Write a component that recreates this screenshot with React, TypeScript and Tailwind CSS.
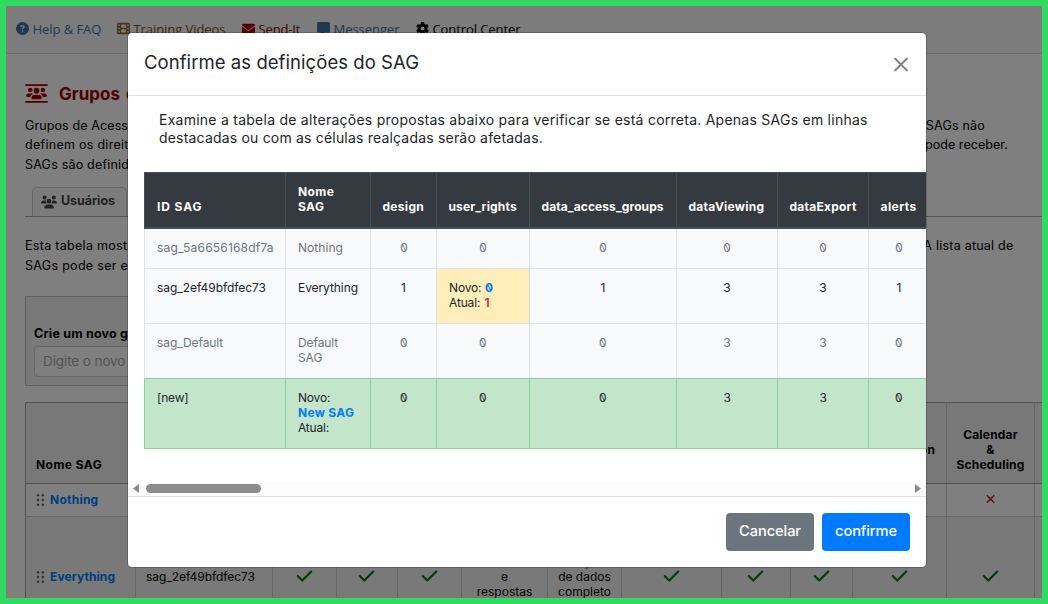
import type { ReactNode } from "react";
import {
  FaCheck,
  FaCircleQuestion,
  FaEnvelope,
  FaFilm,
  FaGear,
  FaMessage,
  FaUsers,
  FaUsersBetweenLines,
  FaXmark,
} from "react-icons/fa6";

function Zero() {
  return <span className="inline-block -scale-x-100 slashed-zero">0</span>;
}

function Digit({ v }: { v: string }) {
  return v === "0" ? <Zero /> : <span>{v}</span>;
}

const navItems: { icon: ReactNode; label: string; style: string; iconStyle: string }[] = [
  { icon: <FaCircleQuestion />, label: "Help & FAQ", style: "text-[#3e72a8] w-[101px] tracking-[-0.06px]", iconStyle: "text-[#3e72a8]" },
  { icon: <FaFilm />, label: "Training Videos", style: "text-[#725627] w-[125px] tracking-[-0.07px]", iconStyle: "text-[#8a6a30]" },
  { icon: <FaEnvelope />, label: "Send-It", style: "text-[#800000] w-[75px] tracking-[-0.14px]", iconStyle: "text-[#a00000]" },
  { icon: <FaMessage />, label: "Messenger", style: "text-[#3e72a8] w-[99px] tracking-[-0.04px]", iconStyle: "text-[#3e72a8]" },
  { icon: <FaGear />, label: "Control Center", style: "text-black tracking-[-0.09px]", iconStyle: "text-black" },
];

function NavBar() {
  return (
    <nav className="flex h-[48px] items-center border-b border-[#dddddd] bg-[#f8f8f8] pl-[10px] font-['Open_Sans',sans-serif] text-[13px]">
      {navItems.map((item) => (
        <div key={item.label} className={`flex shrink-0 items-center gap-[3.5px] whitespace-nowrap ${item.style}`}>
          <span className={`-translate-y-px ${item.iconStyle}`}>{item.icon}</span>
          {item.label}
        </div>
      ))}
    </nav>
  );
}

const columns = ["w-[64px]", "w-[61px]", "w-[64px]", "w-[86px]", "w-[74px]", "w-[100px]", "w-[69px]", "w-[62px]", "w-[94px]", "w-[88px]", "w-[40px]"];

function Check() {
  return <FaCheck className="size-[18px] -translate-x-[0.5px] text-[#008000]" />;
}

function Grip() {
  return (
    <svg className="size-[12px] translate-x-px text-[#606468]" viewBox="0 0 12 12" fill="currentColor">
      {[1.3, 6, 10.7].map((y) => (
        <g key={y}>
          <circle cx="3" cy={y} r="1.25" />
          <circle cx="7.8" cy={y} r="1.25" />
        </g>
      ))}
    </svg>
  );
}

function RolesTable() {
  const cell = "shrink-0 border-l border-[#cccccc]";
  return (
    <div className="mt-[16px] w-[1030px] border-t border-[#a8a8a8] text-[12px] leading-[15px] text-black">
      <div className="flex h-[81px] items-end border-b border-[#a0a0a0] bg-[#f0f0f0] text-center font-bold">
        <div className="flex h-full w-[110px] shrink-0 items-end border-l border-[#a0a0a0] pb-[11px] pl-[10px] tracking-[0.45px]">Nome SAG</div>
        <div className={`${cell} h-full w-[137px]`} />
        {columns.map((w, i) => (
          <div key={i} className={`${cell} ${w} flex h-full items-end justify-center pb-[11px] tracking-[0.2px]`}>
            {i === 8 && <div>Survey<br />Distribution<br />Tools</div>}
            {i === 9 && <div>Calendar<br />&amp;<br />Scheduling</div>}
          </div>
        ))}
      </div>
      <div className="flex h-[33px] border-b border-[#cccccc]">
        <div className="flex w-[110px] shrink-0 items-center gap-[4px] border-l border-[#a0a0a0] pl-[8px] font-bold text-[#007bff]">
          <Grip />
          <span className="-translate-y-px tracking-[0.25px]">Nothing</span>
        </div>
        <div className={`${cell} w-[137px]`} />
        {columns.map((w, i) => (
          <div key={i} className={`${cell} ${w} flex items-center justify-center`}>
            {i === 9 && <FaXmark className="size-[13px] -translate-y-[1.5px] text-[#c82828]" />}
          </div>
        ))}
      </div>
      <div className="flex h-[120px] bg-[#f3f3f3]">
        <div className="flex w-[110px] shrink-0 items-center gap-[4px] border-l border-[#a0a0a0] pl-[8px] font-bold text-[#007bff]">
          <Grip />
          <span className="-translate-y-px tracking-[0.1px]">Everything</span>
        </div>
        <div className={`${cell} flex w-[137px] items-center pb-[2px] pl-[10px] tracking-[-0.05px]`}>sag_2ef49bfdfec73</div>
        {columns.map((w, i) => (
          <div key={i} className={`${cell} ${w} flex items-center justify-center pb-[2px] text-center`}>
            {i === 3 && <div>Editar<br />e<br />respostas</div>}
            {i === 4 && <div>Edição<br />de dados<br />completo</div>}
            {i !== 3 && i !== 4 && i !== 10 && <Check />}
          </div>
        ))}
      </div>
    </div>
  );
}

function Page() {
  return (
    <div className="h-[592px] overflow-hidden bg-white text-black">
      <NavBar />
      <main className="pl-[19px]">
        <h1 className="mt-[28px] flex h-[24px] items-center gap-[11px] text-[17px] font-bold text-[#a00000]">
          <FaUsersBetweenLines className="size-[23px] -translate-y-px" />
          <span className="translate-y-px">Grupos <span className="ml-[2px]">de Acesso</span></span>
        </h1>
        <div className="mt-[10px] text-[12.5px] leading-[19.5px] whitespace-nowrap">
          <div className="flex w-[960px] justify-between"><span className="tracking-[0.11px]">Grupos de Acesso</span><span className="tracking-[0.2px]">SAGs não</span></div>
          <div className="flex w-[983px] -translate-y-px justify-between"><span className="tracking-[0.28px]">definem os direitos</span><span className="tracking-[0.06px]">pode receber.</span></div>
          <div className="tracking-[0.2px]">SAGs são definidos</div>
        </div>
        <div className="mt-[12.5px] flex h-[30px] items-end border-b border-[#a8a8a8] pl-[7px]">
          <div className="flex h-[29px] w-[95px] items-center gap-[4px] rounded-t-[5px] border border-b-0 border-[#cccccc] bg-[#f8f8f8] pb-px pl-[8px] text-[12.5px] font-bold tracking-[-0.06px] text-[#444444]">
            <FaUsers className="size-[16px]" />
            Usuários
          </div>
        </div>
        <div className="mt-[19px] text-[12.5px] leading-[19.5px] whitespace-nowrap">
          <div className="flex w-[988.5px] justify-between"><span className="tracking-[0.3px]">Esta tabela mostra</span><span className="tracking-[0.23px]">A lista atual de</span></div>
          <div className="tracking-[0.3px]">SAGs pode ser editada</div>
        </div>
        <div className="mt-[21px] h-[90px] w-[560px] border border-[#c0c0c0] bg-[#f3f3f3] pt-[27px] pl-[8px]">
          <div className="text-[12.5px] leading-[19px] font-bold tracking-[0.2px]">Crie um novo grupo</div>
          <div className="mt-[3px] flex h-[31px] w-[220px] items-center rounded-[4px] border border-[#cccccc] bg-white pb-px pl-[8px] text-[13.5px] tracking-[-0.1px] text-[#a8a8a8]">Digite o novo</div>
        </div>
        <RolesTable />
      </main>
    </div>
  );
}

const settings: { label: string; width: string; spacing: string }[] = [
  { label: "design", width: "w-[66px]", spacing: "tracking-[0.3px]" },
  { label: "user_rights", width: "w-[93px]", spacing: "tracking-[0.15px]" },
  { label: "data_access_groups", width: "w-[147px]", spacing: "tracking-[0.1px]" },
  { label: "dataViewing", width: "w-[101px]", spacing: "tracking-[0.26px]" },
  { label: "dataExport", width: "w-[91px]", spacing: "tracking-[0.24px]" },
  { label: "alerts", width: "w-[90px]", spacing: "tracking-[0.45px]" },
];

const rows: { id: string; name: ReactNode; tone: string; values: string[] }[] = [
  { id: "sag_5a6656168df7a", name: <span className="tracking-[0.06px]">Nothing</span>, tone: "h-[39px] bg-[#f8f9fa] text-[#6c757d] tracking-[0.19px]", values: ["0", "0", "0", "0", "0", "0"] },
  { id: "sag_2ef49bfdfec73", name: <span className="tracking-[-0.08px]">Everything</span>, tone: "h-[55px] border-t border-[#dee2e6] bg-[#f8f9fa] text-[#212529] tracking-[-0.05px]", values: ["1", "change", "1", "3", "3", "1"] },
  { id: "sag_Default", name: <>Default<br />SAG</>, tone: "h-[55px] border-t border-[#dee2e6] bg-[#f8f9fa] text-[#6c757d] tracking-[-0.08px]", values: ["0", "0", "0", "3", "3", "0"] },
  { id: "[new]", name: <>Novo:<br /><b className="tracking-[0.28px] text-[#007bff]">New SAG</b><br />Atual:</>, tone: "h-[71px] border-y border-[#8fd19e] bg-[#c3e6cb] text-[#212529] tracking-[-0.2px]", values: ["0", "0", "0", "3", "3", "0"] },
];

function ChangesTable() {
  return (
    <div className="w-[814px] text-[12px] leading-[15px]">
      <div className="flex h-[57px] border-t border-b-2 border-[#454d55] bg-[#343a40] font-bold text-white">
        <div className="flex w-[141px] items-end border-l border-[#454d55] px-[12px] pb-[13px] tracking-[0.9px]">ID SAG</div>
        <div className="flex w-[85px] items-end border-l border-[#454d55] px-[12px] pb-[13px] tracking-[0.4px]">Nome<br />SAG</div>
        {settings.map((s) => (
          <div key={s.label} className={`flex items-end border-l border-[#454d55] pl-[11.5px] pb-[13px] ${s.width} ${s.spacing}`}>{s.label}</div>
        ))}
      </div>
      {rows.map((row) => {
        const line = row.id === "[new]" ? "border-l border-[#8fd19e]" : "border-l border-[#dee2e6]";
        return (
          <div key={row.id} className={`flex ${row.tone}`}>
            <div className={`w-[141px] px-[12px] pt-[11px] ${line}`}>{row.id}</div>
            <div className={`w-[85px] px-[12px] pt-[11px] ${line}`}>{row.name}</div>
            {row.values.map((v, i) =>
              v === "change" ? (
                <div key={i} className={`bg-[#ffeeba] pl-[12px] pt-[11px] tracking-[-0.15px] ${line} ${settings[i].width}`}>
                  Novo: <b className="text-[#007bff]"><Zero /></b>
                  <br />
                  Atual: <b className="ml-px text-[#dc3545]">1</b>
                </div>
              ) : (
                <div key={i} className={`pt-[11px] text-center ${line} ${settings[i].width} ${i === 5 ? "pr-[29px]" : ""}`}>
                  <Digit v={v} />
                </div>
              ),
            )}
          </div>
        );
      })}
    </div>
  );
}

function ConfirmDialog() {
  return (
    <div className="mt-[26px] ml-[121px] flex h-[536px] w-[800px] flex-col overflow-hidden rounded-[5px] border border-black/20 bg-white bg-clip-padding text-[#212529]">
      <header className="flex h-[63px] shrink-0 items-center justify-between border-b border-[#dee2e6] pr-[18.5px] pl-[16px]">
        <h2 className="-translate-y-px text-[18.5px] tracking-[0.06px]">Confirme as definições do SAG</h2>
        <svg className="size-[14px] translate-y-[0.5px]" viewBox="0 0 14 14" fill="none" stroke="#7f7f7f" strokeWidth="1.8" strokeLinecap="round">
          <path d="M1 1 L13 13 M13 1 L1 13" />
        </svg>
      </header>
      <div className="flex h-[385px] shrink-0 flex-col overflow-hidden pt-[15px] pl-[16px]">
        <p className="pl-[15px] text-[14px] leading-[18px] whitespace-nowrap">
          <span className="tracking-[0.25px]">Examine a tabela de alterações propostas abaixo para verificar se está correta. Apenas SAGs em linhas</span>
          <br />
          <span className="tracking-[0.19px]">destacadas ou com as células realçadas serão afetadas.</span>
        </p>
        <div className="mt-[25px]">
          <ChangesTable />
        </div>
      </div>
      <div className="flex h-[15px] shrink-0 items-center bg-[#fcfcfc] px-[5px]">
        <svg className="h-[9px] w-[6px]" viewBox="0 0 6 9" fill="#8b8b8b"><path d="M6 0V9L0 4.5Z" /></svg>
        <div className="ml-[7px] h-[9px] w-[115px] rounded-full bg-[#8b8b8b]" />
        <svg className="ml-auto h-[9px] w-[6px]" viewBox="0 0 6 9" fill="#8b8b8b"><path d="M0 0V9L6 4.5Z" /></svg>
      </div>
      <footer className="flex grow items-center justify-end gap-2 border-t border-[#dee2e6] pr-[16px] text-[14.7px] font-medium text-white">
        <button className="h-[38px] w-[88px] rounded-[4px] bg-[#6c757d] pb-[2px] tracking-[-0.11px]">Cancelar</button>
        <button className="h-[38px] w-[88px] rounded-[4px] bg-[#007bff] pb-[2px] tracking-[-0.15px]">confirme</button>
      </footer>
    </div>
  );
}

export default function App() {
  return (
    <div className="relative h-[604px] w-[1048px] overflow-hidden border-[6px] border-[#30d95f] font-['Inter','Liberation_Sans',sans-serif]">
      <Page />
      <div className="absolute inset-0 bg-black/50">
        <ConfirmDialog />
      </div>
    </div>
  );
}
